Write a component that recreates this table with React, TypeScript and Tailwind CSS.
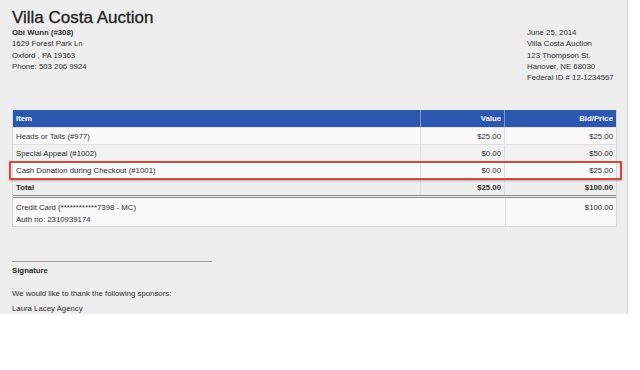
const lineItems = [
  { item: 'Heads or Tails (#977)', value: '$25.00', bid: '$25.00', bg: 'bg-[#fafafa]', h: 'h-[17px]' },
  { item: 'Special Appeal (#1002)', value: '$0.00', bid: '$50.00', bg: 'bg-[#f1f1f1]', h: 'h-[17px]' },
  { item: 'Cash Donation during Checkout (#1001)', value: '$0.00', bid: '$25.00', bg: 'bg-[#fafafa]', h: 'h-[18px]', flagged: true },
];

const App = () => {
  return (
    <div className="w-full h-[370px] bg-white">
      <div
        className="w-[628px] h-[314px] overflow-hidden bg-[#eeeeee] border-r border-[#d6d6d6] px-3 text-[#2e2e2e] text-[7.8px] leading-[11.25px]"
        style={{ fontFamily: '"Liberation Sans", Arial, sans-serif' }}
      >
        <div className="flex justify-between pt-[8px]">
          <div>
            <h1 className="text-[17px] leading-[19px] text-[#222] [-webkit-text-stroke:0.3px_#222]">Villa Costa Auction</h1>
            <p className="font-bold">Obi Wunn (#308)</p>
            <p>1629 Forest Park Ln</p>
            <p>Oxford , PA 19363</p>
            <p>Phone: 503 206 9924</p>
          </div>
          <div className="pt-[19px] w-[88px]">
            <p>June 25, 2014</p>
            <p>Villa Costa Auction</p>
            <p>123 Thompson St.</p>
            <p>Hanover, NE 68030</p>
            <p className="whitespace-nowrap">Federal ID # 12-1234567</p>
          </div>
        </div>

        <div className="mt-[27px] w-[605px] border-x border-b border-[#d8d8d8]">
          <div className="grid grid-cols-[407px_84px_1fr] h-[17px] bg-[#2b57ae] text-white font-bold">
            <div className="flex items-center px-[3px]">Item</div>
            <div className="flex items-center justify-end px-[3px] border-l border-[#7b98d2]">Value</div>
            <div className="flex items-center justify-end px-[3px] border-l border-[#7b98d2]">Bid/Price</div>
          </div>

          {lineItems.map((row) => (
            <div
              key={row.item}
              className={`relative grid grid-cols-[407px_84px_1fr] border-t border-[#e0e0e0] ${row.h} ${row.bg}`}
            >
              <div className="flex items-center px-[3px]">{row.item}</div>
              <div className="flex items-center justify-end px-[3px] border-l border-[#e0e0e0]">{row.value}</div>
              <div className="flex items-center justify-end px-[3px] border-l border-[#e0e0e0]">{row.bid}</div>
              {row.flagged && (
                <div className="absolute -left-[4px] -right-[6px] -top-[1px] -bottom-[1px] border-2 border-[#cf4842] rounded-[1px] shadow-[0_1px_2px_rgba(0,0,0,0.25)]" />
              )}
            </div>
          ))}

          <div className="grid grid-cols-[407px_84px_1fr] h-[19px] bg-[#eeeeee] font-bold border-t border-[#e0e0e0] border-b-[3px] border-b-[#8a8a8a] [border-bottom-style:double]">
            <div className="flex items-center px-[3px]">Total</div>
            <div className="flex items-center justify-end px-[3px] border-l border-[#e0e0e0]">$25.00</div>
            <div className="flex items-center justify-end px-[3px] border-l border-[#e0e0e0]">$100.00</div>
          </div>

          <div className="grid grid-cols-[492px_1fr] h-[28px] bg-[#f9f9f9]">
            <div className="px-[3px] pt-[4px]">
              <p>Credit Card (************7398 - MC)</p>
              <p>Auth no: 2310939174</p>
            </div>
            <div className="px-[3px] pt-[4px] text-right border-l border-[#e0e0e0]">$100.00</div>
          </div>
        </div>

        <div className="mt-[34px] w-[200px] border-t border-[#9a9a9a]" />
        <p className="mt-[3px] font-bold">Signature</p>
        <p className="mt-[11px]">We would like to thank the following sponsors:</p>
        <p className="mt-[4px]">Laura Lacey Agency</p>
      </div>
    </div>
  );
};

export default App;
